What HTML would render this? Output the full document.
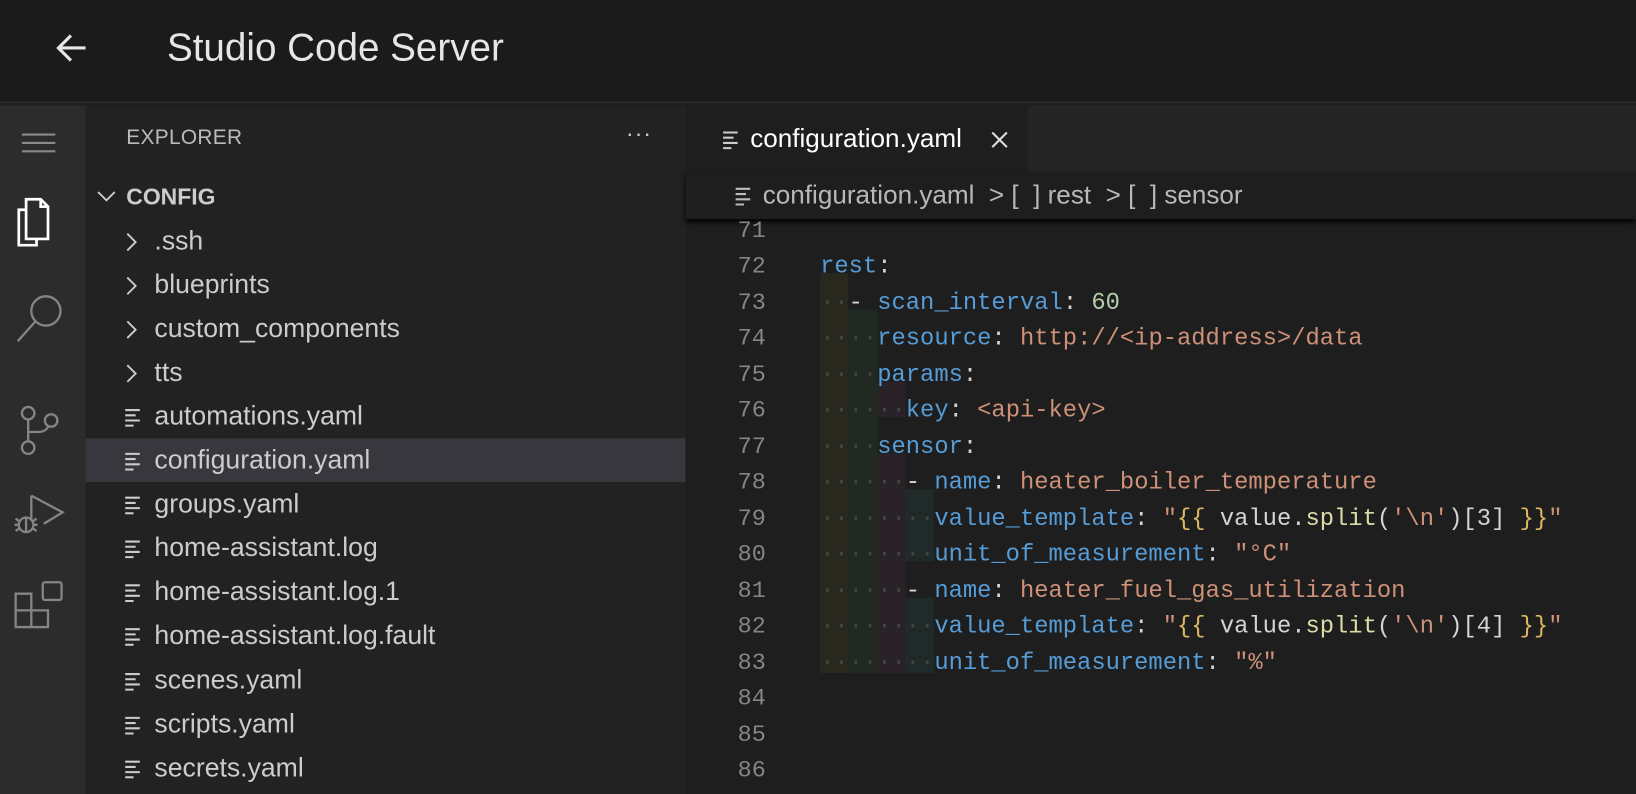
<!DOCTYPE html>
<html><head><meta charset="utf-8"><style>
*{margin:0;padding:0;box-sizing:border-box}
body{width:1636px;height:794px;overflow:hidden;background:#1e1e1e;font-family:"Liberation Sans",sans-serif;position:relative}
#w{position:absolute;left:0;top:0;width:1568px;height:761px;transform:scale(1.0434);transform-origin:0 0}
.hdr{position:absolute;left:0;top:0;width:1568px;height:99px;background:#1b1b1b;border-bottom:2px solid #2b2b2b}
.title{position:absolute;left:160px;top:25px;font-size:37px;color:#e6e6e6}
.act{position:absolute;left:0;top:101px;width:82px;height:660px;background:#2c2c2c}
.side{position:absolute;left:82px;top:101px;width:575px;height:660px;background:#222222}
.row{position:absolute;left:0;width:575px;height:42px;font-size:25.5px;color:#cccccc;line-height:42px}
.row .t{position:absolute;left:66px}
.sel{background:#37373d}
.ed{position:absolute;left:657px;top:101px;width:911px;height:660px;background:#1e1e1e}
.tabs{position:absolute;left:0;top:0;width:911px;height:64px;background:#252526}
.tab{position:absolute;left:0;top:0;width:328px;height:64px;background:#1e1e1e;color:#fff;font-size:25px;line-height:64px}
.bc{position:absolute;left:0;top:64px;width:911px;height:45px;background:#1e1e1e;color:#b8b8b8;font-size:25px;line-height:45px;box-shadow:0 3px 5px #000}
.code{position:absolute;left:0;top:110px;width:911px}
.ln{position:absolute;left:0;width:77px;text-align:right;font-family:"Liberation Mono",monospace;font-size:22.5px;color:#858585;height:34.5px;line-height:34.5px}
.cl{position:absolute;left:129px;font-family:"Liberation Mono",monospace;font-size:22.8px;height:34.5px;line-height:34.5px;white-space:pre;color:#d4d4d4}
.k{color:#569cd6}.s{color:#ce9178}.n{color:#b5cea8}.y{color:#dcb862}.f{color:#dcdcaa}.d{color:#444}
.g{position:absolute}
.icon line,.icon path,.icon rect,.icon circle{stroke:#858585;fill:none;stroke-width:2.2}
</style></head><body><div id="w">
<div class="hdr">
<svg style="position:absolute;left:52px;top:30px" width="34" height="34" viewBox="0 0 34 34"><path d="M30 16H5M16 4L4 16L16 28" stroke="#e6e6e6" stroke-width="3" fill="none"/></svg>
<div class="title">Studio Code Server</div>
</div>
<div class="act">
<svg style="position:absolute;left:20px;top:24px" width="34" height="24"><g stroke="#8a8a8a" stroke-width="2"><line x1="1" y1="4" x2="33" y2="4"/><line x1="1" y1="12" x2="33" y2="12"/><line x1="1" y1="20" x2="33" y2="20"/></g></svg>
<svg style="position:absolute;left:12px;top:88px" width="48" height="52"><g stroke="#fff" stroke-width="2.6" fill="none"><path d="M12 12H6V46H23V40"/><path d="M13 2H27L34 9V40H13Z"/><path d="M27 2V9H34"/></g></svg>
<svg class="icon" style="position:absolute;left:14px;top:180px" width="48" height="50"><circle cx="30" cy="17" r="14"/><line x1="20" y1="27" x2="3" y2="46"/></svg>
<svg class="icon" style="position:absolute;left:16px;top:287px" width="44" height="50"><circle cx="11" cy="8" r="6"/><circle cx="11" cy="41" r="6"/><circle cx="33" cy="15" r="6"/><line x1="11" y1="14" x2="11" y2="35"/><path d="M30 21Q28 26 20 26H11"/></svg>
<svg class="icon" style="position:absolute;left:12px;top:372px" width="50" height="46"><path d="M18 2V25M18 2L48 18L30 29"/><circle cx="13" cy="30" r="7"/><path d="M3 24L7 27M3 36L7 33M23 24L19 27M23 36L19 33M2 30H6M24 30H20M13 23V37"/></svg>
<svg class="icon" style="position:absolute;left:12px;top:454px" width="50" height="50"><path d="M3 14H18V46H3Z M3 30H34V46H18"/><rect x="29" y="3" width="18" height="17" rx="2"/></svg>
</div>
<div class="side">
<div style="position:absolute;left:39px;top:20px;font-size:20px;color:#bbbbbb;letter-spacing:.3px">EXPLORER</div>
<div style="position:absolute;left:518px;top:14px;font-size:22px;color:#ccc;letter-spacing:1px">···</div>
<svg style="position:absolute;left:10px;top:80px" width="20" height="14"><path d="M2 3L10 11L18 3" stroke="#ccc" stroke-width="1.8" fill="none"/></svg>
<div style="position:absolute;left:39px;top:75px;font-size:22px;font-weight:bold;color:#cccccc">CONFIG</div>
<div class="row" style="top:109px"><svg style="position:absolute;left:37px;top:12px" width="14" height="20"><path d="M3 2L11 10L3 18" stroke="#ccc" stroke-width="1.8" fill="none"/></svg><span class="t">.ssh</span></div>
<div class="row" style="top:151px"><svg style="position:absolute;left:37px;top:12px" width="14" height="20"><path d="M3 2L11 10L3 18" stroke="#ccc" stroke-width="1.8" fill="none"/></svg><span class="t">blueprints</span></div>
<div class="row" style="top:193px"><svg style="position:absolute;left:37px;top:12px" width="14" height="20"><path d="M3 2L11 10L3 18" stroke="#ccc" stroke-width="1.8" fill="none"/></svg><span class="t">custom_components</span></div>
<div class="row" style="top:235px"><svg style="position:absolute;left:37px;top:12px" width="14" height="20"><path d="M3 2L11 10L3 18" stroke="#ccc" stroke-width="1.8" fill="none"/></svg><span class="t">tts</span></div>
<div class="row" style="top:277px"><svg style="position:absolute;left:37px;top:13px" width="18" height="18"><g stroke="#ccc" stroke-width="2"><line x1="1" y1="2" x2="15" y2="2"/><line x1="1" y1="7" x2="11" y2="7"/><line x1="1" y1="12" x2="15" y2="12"/><line x1="1" y1="17" x2="9" y2="17"/></g></svg><span class="t">automations.yaml</span></div>
<div class="row sel" style="top:319px"><svg style="position:absolute;left:37px;top:13px" width="18" height="18"><g stroke="#ccc" stroke-width="2"><line x1="1" y1="2" x2="15" y2="2"/><line x1="1" y1="7" x2="11" y2="7"/><line x1="1" y1="12" x2="15" y2="12"/><line x1="1" y1="17" x2="9" y2="17"/></g></svg><span class="t">configuration.yaml</span></div>
<div class="row" style="top:361px"><svg style="position:absolute;left:37px;top:13px" width="18" height="18"><g stroke="#ccc" stroke-width="2"><line x1="1" y1="2" x2="15" y2="2"/><line x1="1" y1="7" x2="11" y2="7"/><line x1="1" y1="12" x2="15" y2="12"/><line x1="1" y1="17" x2="9" y2="17"/></g></svg><span class="t">groups.yaml</span></div>
<div class="row" style="top:403px"><svg style="position:absolute;left:37px;top:13px" width="18" height="18"><g stroke="#ccc" stroke-width="2"><line x1="1" y1="2" x2="15" y2="2"/><line x1="1" y1="7" x2="11" y2="7"/><line x1="1" y1="12" x2="15" y2="12"/><line x1="1" y1="17" x2="9" y2="17"/></g></svg><span class="t">home-assistant.log</span></div>
<div class="row" style="top:445px"><svg style="position:absolute;left:37px;top:13px" width="18" height="18"><g stroke="#ccc" stroke-width="2"><line x1="1" y1="2" x2="15" y2="2"/><line x1="1" y1="7" x2="11" y2="7"/><line x1="1" y1="12" x2="15" y2="12"/><line x1="1" y1="17" x2="9" y2="17"/></g></svg><span class="t">home-assistant.log.1</span></div>
<div class="row" style="top:487px"><svg style="position:absolute;left:37px;top:13px" width="18" height="18"><g stroke="#ccc" stroke-width="2"><line x1="1" y1="2" x2="15" y2="2"/><line x1="1" y1="7" x2="11" y2="7"/><line x1="1" y1="12" x2="15" y2="12"/><line x1="1" y1="17" x2="9" y2="17"/></g></svg><span class="t">home-assistant.log.fault</span></div>
<div class="row" style="top:530px"><svg style="position:absolute;left:37px;top:13px" width="18" height="18"><g stroke="#ccc" stroke-width="2"><line x1="1" y1="2" x2="15" y2="2"/><line x1="1" y1="7" x2="11" y2="7"/><line x1="1" y1="12" x2="15" y2="12"/><line x1="1" y1="17" x2="9" y2="17"/></g></svg><span class="t">scenes.yaml</span></div>
<div class="row" style="top:572px"><svg style="position:absolute;left:37px;top:13px" width="18" height="18"><g stroke="#ccc" stroke-width="2"><line x1="1" y1="2" x2="15" y2="2"/><line x1="1" y1="7" x2="11" y2="7"/><line x1="1" y1="12" x2="15" y2="12"/><line x1="1" y1="17" x2="9" y2="17"/></g></svg><span class="t">scripts.yaml</span></div>
<div class="row" style="top:614px"><svg style="position:absolute;left:37px;top:13px" width="18" height="18"><g stroke="#ccc" stroke-width="2"><line x1="1" y1="2" x2="15" y2="2"/><line x1="1" y1="7" x2="11" y2="7"/><line x1="1" y1="12" x2="15" y2="12"/><line x1="1" y1="17" x2="9" y2="17"/></g></svg><span class="t">secrets.yaml</span></div>
</div>
<div class="ed">
<div class="tabs"><div class="tab">
<svg style="position:absolute;left:35px;top:24px" width="18" height="18"><g stroke="#ccc" stroke-width="2"><line x1="1" y1="2" x2="15" y2="2"/><line x1="1" y1="7" x2="11" y2="7"/><line x1="1" y1="12" x2="15" y2="12"/><line x1="1" y1="17" x2="9" y2="17"/></g></svg>
<span style="position:absolute;left:62px">configuration.yaml</span>
<svg style="position:absolute;left:293px;top:25px" width="16" height="16"><path d="M1 1L15 15M15 1L1 15" stroke="#ddd" stroke-width="2"/></svg>
</div></div>
<div class="bc">
<svg style="position:absolute;left:47px;top:14px" width="18" height="18"><g stroke="#bbb" stroke-width="2"><line x1="1" y1="2" x2="15" y2="2"/><line x1="1" y1="7" x2="11" y2="7"/><line x1="1" y1="12" x2="15" y2="12"/><line x1="1" y1="17" x2="9" y2="17"/></g></svg>
<span style="position:absolute;left:74px;white-space:pre">configuration.yaml  &gt; [  ] rest  &gt; [  ] sensor</span>
</div>
<div class="code">
<div class="g" style="left:129px;top:51px;width:27px;height:383px;background:#28281f"></div>
<div class="g" style="left:156px;top:86px;width:28px;height:348px;background:#212a22"></div>
<div class="g" style="left:184px;top:155px;width:27px;height:34px;background:#2a2229"></div>
<div class="g" style="left:184px;top:224px;width:27px;height:210px;background:#2a2229"></div>
<div class="g" style="left:211px;top:258px;width:27px;height:69px;background:#1f2a29"></div>
<div class="g" style="left:211px;top:362px;width:27px;height:72px;background:#1f2a29"></div>
<div class="ln" style="top:-7px">71</div><div class="ln" style="top:27px">72</div><div class="ln" style="top:62px">73</div><div class="ln" style="top:96px">74</div><div class="ln" style="top:131px">75</div><div class="ln" style="top:165px">76</div><div class="ln" style="top:200px">77</div><div class="ln" style="top:234px">78</div><div class="ln" style="top:269px">79</div><div class="ln" style="top:303px">80</div><div class="ln" style="top:338px">81</div><div class="ln" style="top:372px">82</div><div class="ln" style="top:407px">83</div><div class="ln" style="top:441px">84</div><div class="ln" style="top:476px">85</div><div class="ln" style="top:510px">86</div>
<div class="cl" style="top:27px"><span class="k">rest</span>:</div>
<div class="cl" style="top:62px"><span class="d">··</span>- <span class="k">scan_interval</span>: <span class="n">60</span></div>
<div class="cl" style="top:96px"><span class="d">····</span><span class="k">resource</span>: <span class="s">http://&lt;ip-address&gt;/data</span></div>
<div class="cl" style="top:131px"><span class="d">····</span><span class="k">params</span>:</div>
<div class="cl" style="top:165px"><span class="d">······</span><span class="k">key</span>: <span class="s">&lt;api-key&gt;</span></div>
<div class="cl" style="top:200px"><span class="d">····</span><span class="k">sensor</span>:</div>
<div class="cl" style="top:234px"><span class="d">······</span>- <span class="k">name</span>: <span class="s">heater_boiler_temperature</span></div>
<div class="cl" style="top:269px"><span class="d">········</span><span class="k">value_template</span>: <span class="s">"</span><span class="y">{{</span> value.<span class="f">split</span>(<span class="s">'\n'</span>)[3] <span class="y">}}</span><span class="s">"</span></div>
<div class="cl" style="top:303px"><span class="d">········</span><span class="k">unit_of_measurement</span>: <span class="s">"°C"</span></div>
<div class="cl" style="top:338px"><span class="d">······</span>- <span class="k">name</span>: <span class="s">heater_fuel_gas_utilization</span></div>
<div class="cl" style="top:372px"><span class="d">········</span><span class="k">value_template</span>: <span class="s">"</span><span class="y">{{</span> value.<span class="f">split</span>(<span class="s">'\n'</span>)[4] <span class="y">}}</span><span class="s">"</span></div>
<div class="cl" style="top:407px"><span class="d">········</span><span class="k">unit_of_measurement</span>: <span class="s">"%"</span></div>
</div>
</div>
</div></body></html>
